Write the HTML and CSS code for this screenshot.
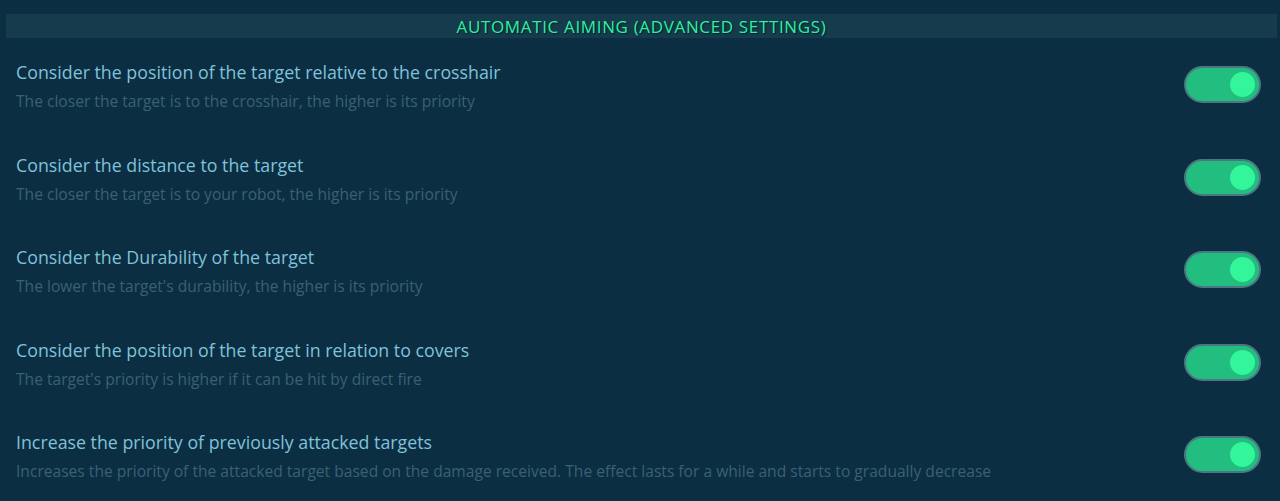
FILE: index.html
```html
<!DOCTYPE html>
<html>
<head>
<meta charset="utf-8">
<link rel="stylesheet" href="styles.css">
</head>
<body>
<div class="page">
  <div class="header">AUTOMATIC AIMING (ADVANCED SETTINGS)</div>
  <div class="list">
    <div class="row">
      <div class="texts">
        <div class="title">Consider the position of the target relative to the crosshair</div>
        <div class="desc">The closer the target is to the crosshair, the higher is its priority</div>
      </div>
      <div class="toggle on"><span class="knob"></span></div>
    </div>
    <div class="row">
      <div class="texts">
        <div class="title">Consider the distance to the target</div>
        <div class="desc">The closer the target is to your robot, the higher is its priority</div>
      </div>
      <div class="toggle on"><span class="knob"></span></div>
    </div>
    <div class="row">
      <div class="texts">
        <div class="title">Consider the Durability of the target</div>
        <div class="desc">The lower the target's durability, the higher is its priority</div>
      </div>
      <div class="toggle on"><span class="knob"></span></div>
    </div>
    <div class="row">
      <div class="texts">
        <div class="title">Consider the position of the target in relation to covers</div>
        <div class="desc">The target's priority is higher if it can be hit by direct fire</div>
      </div>
      <div class="toggle on"><span class="knob"></span></div>
    </div>
    <div class="row">
      <div class="texts">
        <div class="title">Increase the priority of previously attacked targets</div>
        <div class="desc">Increases the priority of the attacked target based on the damage received. The effect lasts for a while and starts to gradually decrease</div>
      </div>
      <div class="toggle on"><span class="knob"></span></div>
    </div>
  </div>
</div>
</body>
</html>
```
FILE: styles.css
```css
html, body {
  margin: 0;
  padding: 0;
  background: #0b2e42;
  height: 100%;
}
.page {
  padding: 14px 3px 0 6px;
  font-family: "Open Sans", "Liberation Sans", sans-serif;
}
.header {
  height: 24px;
  line-height: 25px;
  background: #153b4d;
  color: #2ff0a0;
  text-align: center;
  font-size: 17px;
  letter-spacing: 0.65px;
  text-shadow: 1px 1px 1px #05202c;
}
.list {
  display: flex;
  flex-direction: column;
  gap: 41.6px;
  padding: 23px 16px 0 10px;
}
.row {
  display: flex;
  align-items: flex-start;
  justify-content: space-between;
}
.title {
  font-size: 17.8px;
  line-height: 22px;
  color: #80c2da;
}
.desc {
  font-size: 15.6px;
  line-height: 22px;
  color: #3b6076;
  margin-top: 7px;
}
.toggle {
  margin-top: 5px;
  width: 77px;
  height: 37px;
  border: 2px solid #4c7682;
  border-radius: 20px;
  background: #22be7f;
  display: flex;
  align-items: center;
  justify-content: flex-end;
  padding-right: 4px;
  box-sizing: border-box;
  flex-shrink: 0;
}
.knob {
  width: 25px;
  height: 25px;
  border-radius: 50%;
  background: #33f59a;
}
```
